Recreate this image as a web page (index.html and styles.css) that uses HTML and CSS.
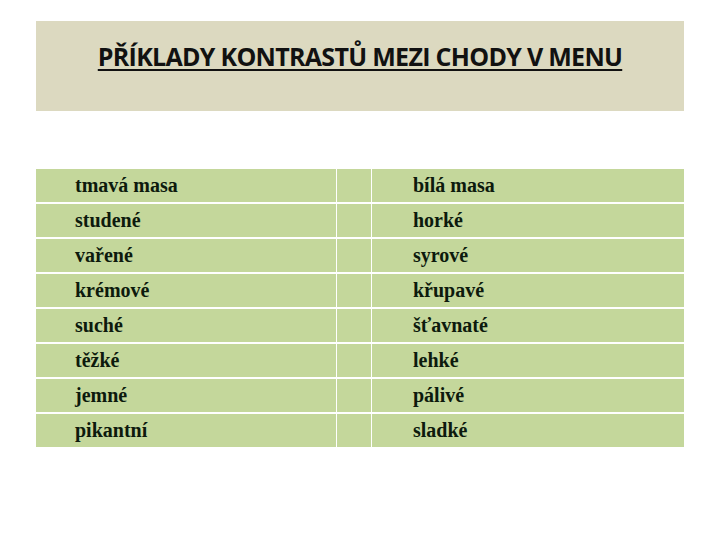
FILE: index.html
```html
<!DOCTYPE html>
<html>
<head>
<meta charset="utf-8">
<link rel="stylesheet" href="styles.css">
</head>
<body>
<div class="page">
  <header class="banner">
    <h1 class="title">PŘÍKLADY KONTRASTŮ MEZI CHODY V MENU</h1>
  </header>
  <div class="table">
    <div class="row"><div class="cell a">tmavá masa</div><div class="cell mid"></div><div class="cell b">bílá masa</div></div>
    <div class="row"><div class="cell a">studené</div><div class="cell mid"></div><div class="cell b">horké</div></div>
    <div class="row"><div class="cell a">vařené</div><div class="cell mid"></div><div class="cell b">syrové</div></div>
    <div class="row"><div class="cell a">krémové</div><div class="cell mid"></div><div class="cell b">křupavé</div></div>
    <div class="row"><div class="cell a">suché</div><div class="cell mid"></div><div class="cell b">šťavnaté</div></div>
    <div class="row"><div class="cell a">těžké</div><div class="cell mid"></div><div class="cell b">lehké</div></div>
    <div class="row"><div class="cell a">jemné</div><div class="cell mid"></div><div class="cell b">pálivé</div></div>
    <div class="row"><div class="cell a">pikantní</div><div class="cell mid"></div><div class="cell b">sladké</div></div>
  </div>
</div>
</body>
</html>
```
FILE: styles.css
```css
html, body {
  margin: 0;
  padding: 0;
  background: #ffffff;
}
.page {
  width: 720px;
  height: 540px;
  padding: 21px 36px 0 36px;
  box-sizing: border-box;
}
.banner {
  height: 90px;
  background: #dcd9c0;
  display: flex;
  justify-content: center;
  align-items: flex-start;
}
.title {
  margin: 18px 0 0 0;
  font-family: "Open Sans", "Liberation Sans", sans-serif;
  font-weight: 700;
  font-size: 25px;
  letter-spacing: -0.7px;
  color: #111;
  text-decoration: underline;
  text-decoration-thickness: 2px;
  text-underline-offset: 3px;
}
.table {
  margin-top: 58px;
  display: flex;
  flex-direction: column;
  gap: 2px;
}
.row {
  display: grid;
  grid-template-columns: 300px 34px 312px;
  column-gap: 1px;
  height: 33px;
}
.cell {
  background: #c4d79b;
  font-family: "Liberation Serif", "Times New Roman", serif;
  font-weight: 700;
  font-size: 20px;
  color: #0d1a0d;
  display: flex;
  align-items: center;
}
.a {
  padding-left: 39px;
}
.b {
  padding-left: 41px;
}
```
